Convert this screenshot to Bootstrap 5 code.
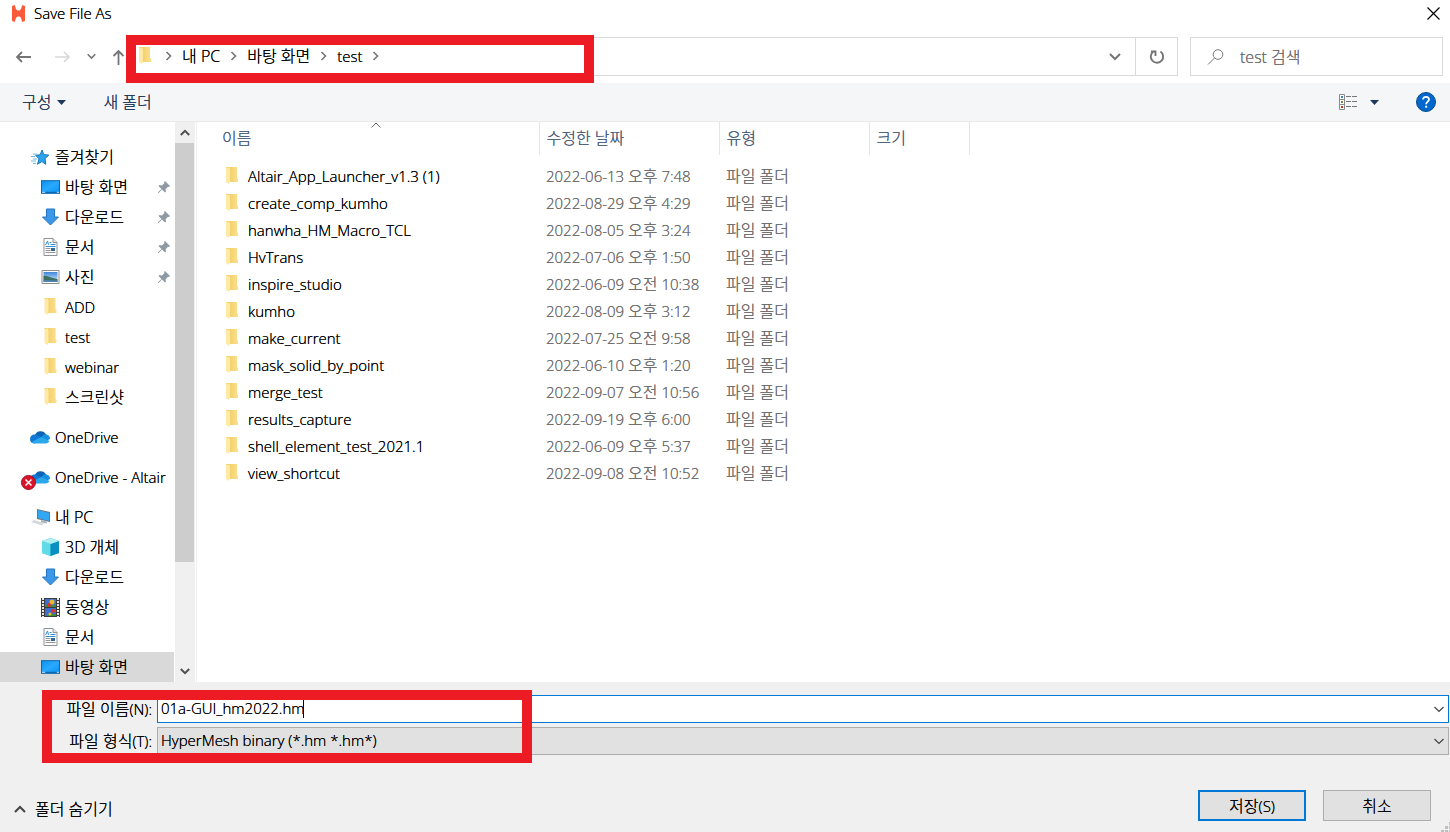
<!DOCTYPE html>
<html lang="ko">
<head>
<meta charset="utf-8">
<meta name="viewport" content="width=device-width, initial-scale=1">
<title>Save File As</title>
<link href="https://cdn.jsdelivr.net/npm/bootstrap@5.3.0/dist/css/bootstrap.min.css" rel="stylesheet">
<style>
  body, .btn, .form-control, .form-select { font-family: "Open Sans", "Noto Sans CJK KR", sans-serif; font-size: 15px; font-weight: 300; line-height: 20px; color: #000; border-radius: 0; text-shadow: 0 0 0 currentColor; }
  .hangul { font-size: 16px; }
  svg { display: block; flex: none; }
  .btn { padding: 0; border: 0; }
  .title-bar { height: 28px; padding: 0 10px 2px 11px; }
  .address-row { height: 55px; padding: 9px 7px 7px 15px; }
  .nav-btn { width: 16px; }
  .address-box, .search-box { border: 1px solid #d9d9d9; background: #fff; height: 39px; }
  .crumbs { gap: 10px; padding: 0 0 2px 9px; }
  .history-btn { margin-right: 14px; }
  .refresh-btn { width: 42px; border-left: 1px solid #d9d9d9; }
  .search-box { width: 253px; margin-left: 12px; }
  .search-box input::placeholder { color: #6d6d6d; opacity: 1; }
  .callout-box { position: absolute; border: 10px solid #ed1c24; pointer-events: none; z-index: 3; }
  .callout-path { left: -4px; top: -3px; width: 468px; height: 48px; }
  .callout-name { left: 42px; top: 8px; width: 490px; height: 73px; }
  .tool-row { height: 39px; background: #f5f6f7; border-bottom: 1px solid #e8e9ea; padding: 0 14px 0 22px; }
  .tool-row .btn { color: #1e395b; }
  .tool-row .btn-next { margin-left: 37px; }
  .menu-gap { gap: 6px; }
  .view-gap { gap: 13px; }
  .tree { width: 175px; padding-top: 20px; }
  .tree a { display: flex; align-items: center; height: 30px; gap: 5px; padding-left: 41px; padding-right: 3px; color: #000; text-decoration: none; white-space: nowrap; margin-right: 1px; }
  .tree a.root { padding-left: 30px; }
  .tree a.latin { font-size: 15px; }
  .tree .group-gap { margin-top: 10px; }
  .tree a.selected { background: #d9d9d9; }
  .error-dot { position: absolute; left: -9px; top: 5px; }
  .scroll-track { width: 20px; background: #f0f0f0; margin-right: 1px; }
  .scroll-track .btn { height: 21px; width: 19px; }
  .scroll-thumb { flex: 419 1 0; width: 19px; background: #cdcdcd; }
  .scroll-rest { flex: 99 1 0; }
  .file-pane { border-left: 1px solid #f0f0f0; }
  .file-table { table-layout: fixed; width: 100%; }
  .file-table th { height: 33px; padding: 0 7px 2px; border-right: 1px solid #e5e5e5; color: #4c607a; font-weight: 300; font-size: 16px; position: relative; }
  .file-table th:first-child { padding-left: 25px; }
  .file-table th:last-child { border: 0; }
  .file-table td { height: 27px; padding: 0 7px; color: #6d6d6d; white-space: nowrap; }
  .file-table td:first-child { padding-left: 29px; color: #000; }
  .file-table tbody::before { content: ""; display: block; height: 7px; }
  .fname { gap: 10px; }
  .sort-mark { position: absolute; left: 174px; top: 0; }
  .dialog-foot { background: #f0f0f0; height: 150px; padding: 13px 1px 0 0; }
  .field-label { width: 157px; padding-right: 5px; text-align: right; white-space: nowrap; }
  .field { height: 28px; padding: 0 24px 2px 3px; }
  .field-name { border: 1px solid #0078d7; }
  .field-type { border: 1px solid #adadad; background: #e1e1e1; }
  .field-mark { position: absolute; right: 5px; top: 11px; pointer-events: none; }
  .caret { position: absolute; left: 146px; top: 4px; width: 1px; height: 19px; background: #000; }
  .foot-btns { padding: 35px 18px 0 14px; gap: 17px; }
  .hide-btn { gap: 9px; padding-top: 6px; }
  .push { width: 108px; height: 31px; background: #e1e1e1; border: 1px solid #adadad; }
  .push-main { border: 2px solid #0078d7; }
  .grip { position: absolute; right: 0; bottom: 0; }
</style>
</head>
<body>
<svg width="0" height="0" class="position-absolute" aria-hidden="true">
  <defs>
    <linearGradient id="gFold" x1="0" x2="1"><stop offset="0" stop-color="#f2cf6b"/><stop offset="1" stop-color="#fbe08c"/></linearGradient>
    <linearGradient id="gScreen" x1="0" x2="1" y2="1"><stop offset="0" stop-color="#0a94f2"/><stop offset=".5" stop-color="#2aa9ff"/><stop offset="1" stop-color="#0c95f5"/></linearGradient>
    <linearGradient id="gSky" x2="0" y2="1"><stop offset="0" stop-color="#3f86d8"/><stop offset="1" stop-color="#d9efff"/></linearGradient>
  </defs>
  <symbol id="folder" viewBox="0 0 12 18"><path d="M3 0h8v11l1 1v3H3z" fill="url(#gFold)"/><path d="M0 0h2l2 2v13l-1 2-3-2z" fill="#ffe9a6"/><path d="M0 0h3v1H0z" fill="#f6d778"/></symbol>
  <symbol id="desktop" viewBox="0 0 18 13"><path d="M0 0h18v13H0z" fill="#0b68b0"/><path d="M1 1h16v10H1z" fill="url(#gScreen)"/><path d="M1 11h3v1H1zM15 11h2v1h-2z" fill="#d8efff"/></symbol>
  <symbol id="download" viewBox="0 0 18 18"><path d="M5 1h8v8h4l-8 8-8-8h4z" fill="#3b97e8" stroke="#2476c4"/></symbol>
  <symbol id="docs" viewBox="0 0 16 18"><path d="M1.500.5h9l4 4v13h-13z" fill="#fff" stroke="#8d9297"/><path d="M10.500.5v4h4" fill="#e5e5e5" stroke="#8d9297"/><path d="M3 7l2-4 1 4M7 4.500h2M8 6.500h5M3 8.500h10" fill="none" stroke="#2f8fd6"/><path d="M8.500 10h4v3h-4z" fill="#35699b"/><path d="M3 10.500h5M3 12.500h5M3 14.500h10" stroke="#999"/></symbol>
  <symbol id="photo" viewBox="0 0 18 14"><path d="M.5.5h17v13H.5z" fill="#fff" stroke="#8c8c8c"/><path d="M2 2h14v10H2z" fill="url(#gSky)"/><path d="M2 6c4-1 6 2 14 3v3H2z" fill="#3f6f62"/><path d="M2 10l14 .5V12H2z" fill="#4d86b5"/></symbol>
  <symbol id="cloud" viewBox="0 0 20 14"><path d="M5 5a6 6 0 0 1 11-.5L12 9 4 8z" fill="#0a63b4"/><path d="M4.500 4.500A5 5 0 0 1 9 6l6 4-11 3.500A4.500 4.500 0 0 1 0 9a4.500 4.500 0 0 1 4.500-4.500z" fill="#0f78d4"/><path d="M11 7.500c1.500-3 4-3.500 5.500-3A4.600 4.600 0 0 1 20 9l-4 2z" fill="#1490df"/><path d="M1.500 12L11 7l8.500 4a4 4 0 0 1-3.500 2.500H4.500A4.500 4.500 0 0 1 1.500 12z" fill="#2aa8ea"/></symbol>
  <symbol id="pin" viewBox="0 0 14 14"><path d="M8 1l5 5-1 1-1-.3-2.500 2.500.5 2.300L8 12.500 5 9.500 1.500 13H1v-.7L4.500 9l-3-3 1-1L5 5.500 7.500 3 7 2z" fill="#8e99a3"/></symbol>
  <symbol id="chev-r" viewBox="0 0 7 10"><path d="M1.500 1l4 4-4 4" fill="none" stroke="#767676" stroke-width="1.600"/></symbol>
  <symbol id="chev-thin" viewBox="0 0 10 7"><path d="M.5 1L5 5.500 9.500 1" fill="none" stroke="#444" stroke-width="1.200"/></symbol>
</svg>

<div class="d-flex flex-column min-vh-100 bg-white">
  <header class="title-bar d-flex align-items-center">
    <svg width="15" height="17" viewBox="0 0 15 17"><path d="M1 1l3-1c.5 4 1.500 5.500 3.500 5.500S10.500 4 11 0l3 1v15l-3 1c-.5-4-1.500-5.500-3.500-5.500S4.500 13 4 17l-3-1z" fill="#fa5a3c"/></svg>
    <span class="ms-2">Save File As</span>
    <button class="btn ms-auto" aria-label="닫기"><svg width="13" height="13" viewBox="0 0 13 13"><path d="M.5.5l12 12M12.500.5l-12 12" stroke="#000" stroke-width="1.200"/></svg></button>
  </header>

  <div class="address-row d-flex">
    <nav class="d-flex align-items-center" aria-label="탐색">
      <button class="btn nav-btn" aria-label="뒤로"><svg width="17" height="12" viewBox="0 0 17 12"><path d="M16 6H2M7 1L2 6l5 5" fill="none" stroke="#757575" stroke-width="1.800"/></svg></button>
      <button class="btn nav-btn ms-4" aria-label="앞으로"><svg width="17" height="12" viewBox="0 0 17 12"><path d="M0 6h14M9 1l5 5-5 5" fill="none" stroke="#d8d8d8" stroke-width="1.600"/></svg></button>
      <button class="btn ms-3" aria-label="최근 위치"><svg width="9" height="7" viewBox="0 0 9 7"><path d="M.7 1.200l3.800 3.800 3.800-3.800" fill="none" stroke="#757575" stroke-width="1.600"/></svg></button>
      <button class="btn ms-3" aria-label="위로"><svg width="13" height="16" viewBox="0 0 13 16"><path d="M6.500 16V2M1.500 7l5-5 5 5" fill="none" stroke="#757575" stroke-width="1.800"/></svg></button>
    </nav>
    <div class="address-box d-flex flex-grow-1 position-relative ms-1">
      <div class="crumbs d-flex align-items-center flex-grow-1">
        <svg class="me-1" width="12" height="18"><use href="#folder"/></svg>
        <svg width="7" height="10"><use href="#chev-r"/></svg>
        <span class="hangul">내 PC</span>
        <svg width="7" height="10"><use href="#chev-r"/></svg>
        <span class="hangul">바탕 화면</span>
        <svg width="7" height="10"><use href="#chev-r"/></svg>
        <span>test</span>
        <svg width="7" height="10"><use href="#chev-r"/></svg>
      </div>
      <button class="btn history-btn" aria-label="이전 위치"><svg width="12" height="9" viewBox="0 0 12 9"><path d="M1 2l5 5 5-5" fill="none" stroke="#757575" stroke-width="2"/></svg></button>
      <button class="btn refresh-btn d-flex align-items-center justify-content-center" aria-label="새로 고침"><svg width="16" height="16" viewBox="0 0 16 16"><path d="M11.500 2.500a6.200 6.200 0 1 1-7.500.3M2 2.500h4.500V7" fill="none" stroke="#757575" stroke-width="1.900"/></svg></button>
      <div class="callout-box callout-path"></div>
    </div>
    <div class="search-box d-flex align-items-center">
      <svg class="ms-3" width="17" height="16" viewBox="0 0 17 16"><circle cx="11" cy="5.500" r="4.800" fill="none" stroke="#777"/><path d="M7.500 9L1 15.500" stroke="#777"/></svg>
      <input class="form-control border-0 p-0 ms-3 bg-transparent hangul" type="search" placeholder="test 검색" aria-label="test 검색">
    </div>
  </div>

  <div class="tool-row d-flex align-items-center">
    <button class="btn hangul d-flex align-items-center menu-gap">구성<svg width="9" height="5" viewBox="0 0 9 5"><path d="M0 0h9L4.500 5z" fill="#1e395b"/></svg></button>
    <button class="btn hangul btn-next">새 폴더</button>
    <button class="btn ms-auto d-flex align-items-center view-gap" aria-label="보기 변경"><svg width="18" height="16" viewBox="0 0 18 16"><path d="M.5.5h5v15h-5zM.5 5.500h5M.5 10.500h5" fill="#fff" stroke="#8a8a8a"/><path d="M7 2.500h5M13 2.500h5M7 7.500h5M13 7.500h5M7 12.500h5M13 12.500h5" stroke="#777"/><path d="M2 2h2v2H2z" fill="#3c7fc0"/><path d="M2 7h2v2H2z" fill="#6a8f3c"/><path d="M2 12h2v2H2z" fill="#c0391f"/></svg><svg width="9" height="5" viewBox="0 0 9 5"><path d="M0 0h9L4.500 5z" fill="#1e395b"/></svg></button>
    <button class="btn btn-next" aria-label="도움말"><svg width="20" height="20" viewBox="0 0 20 20"><circle cx="10" cy="10" r="9.500" fill="#0067cc" stroke="#0b4c8c"/><path d="M7 7.500C7 3.800 13 4 13 7.500c0 2.200-2.800 2.200-2.800 4.700" fill="none" stroke="#fff" stroke-width="1.800"/><path d="M9.200 13.700h2v2h-2z" fill="#fff"/></svg></button>
  </div>

  <main class="d-flex flex-grow-1">
    <nav class="tree flex-shrink-0 hangul" aria-label="폴더">
      <a href="#" class="root"><svg width="20" height="18" viewBox="0 0 20 18"><path d="M12 2l1.800 4.700 5 .4-3.800 3.400.8 5.800-4-2.800-4.300 2.800 1.500-5.500-3.300-3.500 4.500-.5z" fill="#2ba3ee" stroke="#1478bd"/><path d="M3 6h4M1 8.500h4M3 11h4M1 13h5M3 15.500h3" stroke="#6bbbe8"/></svg>즐겨찾기</a>
      <a href="#"><svg width="19" height="14"><use href="#desktop"/></svg>바탕 화면<svg class="ms-auto" width="14" height="14"><use href="#pin"/></svg></a>
      <a href="#"><svg width="19" height="18"><use href="#download"/></svg>다운로드<svg class="ms-auto" width="14" height="14"><use href="#pin"/></svg></a>
      <a href="#"><svg width="19" height="18"><use href="#docs"/></svg>문서<svg class="ms-auto" width="14" height="14"><use href="#pin"/></svg></a>
      <a href="#"><svg width="19" height="14"><use href="#photo"/></svg>사진<svg class="ms-auto" width="14" height="14"><use href="#pin"/></svg></a>
      <a href="#" class="latin"><svg width="19" height="18"><use href="#folder"/></svg>ADD</a>
      <a href="#" class="latin"><svg width="19" height="18"><use href="#folder"/></svg>test</a>
      <a href="#" class="latin"><svg width="19" height="18"><use href="#folder"/></svg>webinar</a>
      <a href="#"><svg width="19" height="18"><use href="#folder"/></svg>스크린샷</a>
      <a href="#" class="root latin group-gap"><svg width="20" height="14"><use href="#cloud"/></svg>OneDrive</a>
      <a href="#" class="root latin group-gap"><span class="position-relative"><svg width="20" height="14"><use href="#cloud"/></svg><svg class="error-dot" width="15" height="15" viewBox="0 0 15 15"><circle cx="7.500" cy="7.500" r="7" fill="#d9142b" stroke="#a50d20"/><path d="M4.500 4.500l6 6M10.500 4.500l-6 6" stroke="#fff" stroke-width="1.500"/></svg></span>OneDrive - Altair</a>
      <a href="#" class="root group-gap"><svg width="20" height="18" viewBox="0 0 20 18"><path d="M7 1l13 3v10L7 11z" fill="#6b7680"/><path d="M8 2l11 3v8L8 10z" fill="#31a8f5"/><path d="M11 12l6 1.500v2l-6-1z" fill="#aeb4ba"/><path d="M4 12l10 3-2 2.500L1 14z" fill="#d5d9dc"/></svg>내 PC</a>
      <a href="#"><svg width="19" height="18" viewBox="0 0 19 18"><path d="M9.500 0L18 3v12l-8.500 3L1 15V3z" fill="#2cc0d8"/><path d="M1 3l8.500 3v12L1 15z" fill="#63dbe6"/><path d="M9.500 6L18 3v12l-8.500 3z" fill="#0a8fc0"/><path d="M9.500 0L18 3 9.500 6 1 3z" fill="#aef0f2"/></svg>3D 개체</a>
      <a href="#"><svg width="19" height="18"><use href="#download"/></svg>다운로드</a>
      <a href="#"><svg width="19" height="19" viewBox="0 0 19 19"><path d="M0 0h19v19H0z" fill="#3b3b3b"/><path d="M2 0v19M17 0v19" stroke="#e8e8e8" stroke-width="2" stroke-dasharray="2 1"/><path d="M4 1h11v8H4zM4 10h11v8H4z" fill="#3f6fd0"/><path d="M5 7h9v2H5zM6 16h8v2H6z" fill="#3c8f3a"/><circle cx="11" cy="4" r="2.500" fill="#e9b92c"/><circle cx="8" cy="7" r="2" fill="#d9342b"/><circle cx="12" cy="13" r="2" fill="#d9342b"/><circle cx="9" cy="16" r="1.500" fill="#e9b92c"/></svg>동영상</a>
      <a href="#"><svg width="19" height="18"><use href="#docs"/></svg>문서</a>
      <a href="#" class="selected"><svg width="19" height="14"><use href="#desktop"/></svg>바탕 화면</a>
    </nav>
    <div class="scroll-track d-flex flex-column flex-shrink-0">
      <button class="btn d-flex align-items-center justify-content-center" aria-label="위로 스크롤"><svg width="10" height="7" viewBox="0 0 10 7"><path d="M.8 6L5 1.800 9.200 6" fill="none" stroke="#505050" stroke-width="2"/></svg></button>
      <div class="scroll-thumb"></div>
      <div class="scroll-rest"></div>
      <button class="btn d-flex align-items-center justify-content-center" aria-label="아래로 스크롤"><svg width="10" height="7" viewBox="0 0 10 7"><path d="M.8 1L5 5.200 9.200 1" fill="none" stroke="#505050" stroke-width="2"/></svg></button>
    </div>
    <section class="file-pane flex-grow-1">
      <table class="file-table">
        <colgroup><col style="width:342px"><col style="width:180px"><col style="width:150px"><col style="width:100px"><col></colgroup>
        <thead><tr><th>이름<svg class="sort-mark" width="10" height="7" viewBox="0 0 10 7"><path d="M.5 5.500L5 1l4.500 4.500" fill="none" stroke="#666"/></svg></th><th>수정한 날짜</th><th>유형</th><th>크기</th><th></th></tr></thead>
        <tbody>
          <tr><td><div class="d-flex align-items-center fname"><svg width="12" height="18"><use href="#folder"/></svg>Altair_App_Launcher_v1.3 (1)</div></td><td>2022-06-13 <span class="hangul">오후</span> 7:48</td><td class="hangul">파일 폴더</td><td></td><td></td></tr>
          <tr><td><div class="d-flex align-items-center fname"><svg width="12" height="18"><use href="#folder"/></svg>create_comp_kumho</div></td><td>2022-08-29 <span class="hangul">오후</span> 4:29</td><td class="hangul">파일 폴더</td><td></td><td></td></tr>
          <tr><td><div class="d-flex align-items-center fname"><svg width="12" height="18"><use href="#folder"/></svg>hanwha_HM_Macro_TCL</div></td><td>2022-08-05 <span class="hangul">오후</span> 3:24</td><td class="hangul">파일 폴더</td><td></td><td></td></tr>
          <tr><td><div class="d-flex align-items-center fname"><svg width="12" height="18"><use href="#folder"/></svg>HvTrans</div></td><td>2022-07-06 <span class="hangul">오후</span> 1:50</td><td class="hangul">파일 폴더</td><td></td><td></td></tr>
          <tr><td><div class="d-flex align-items-center fname"><svg width="12" height="18"><use href="#folder"/></svg>inspire_studio</div></td><td>2022-06-09 <span class="hangul">오전</span> 10:38</td><td class="hangul">파일 폴더</td><td></td><td></td></tr>
          <tr><td><div class="d-flex align-items-center fname"><svg width="12" height="18"><use href="#folder"/></svg>kumho</div></td><td>2022-08-09 <span class="hangul">오후</span> 3:12</td><td class="hangul">파일 폴더</td><td></td><td></td></tr>
          <tr><td><div class="d-flex align-items-center fname"><svg width="12" height="18"><use href="#folder"/></svg>make_current</div></td><td>2022-07-25 <span class="hangul">오전</span> 9:58</td><td class="hangul">파일 폴더</td><td></td><td></td></tr>
          <tr><td><div class="d-flex align-items-center fname"><svg width="12" height="18"><use href="#folder"/></svg>mask_solid_by_point</div></td><td>2022-06-10 <span class="hangul">오후</span> 1:20</td><td class="hangul">파일 폴더</td><td></td><td></td></tr>
          <tr><td><div class="d-flex align-items-center fname"><svg width="12" height="18"><use href="#folder"/></svg>merge_test</div></td><td>2022-09-07 <span class="hangul">오전</span> 10:56</td><td class="hangul">파일 폴더</td><td></td><td></td></tr>
          <tr><td><div class="d-flex align-items-center fname"><svg width="12" height="18"><use href="#folder"/></svg>results_capture</div></td><td>2022-09-19 <span class="hangul">오후</span> 6:00</td><td class="hangul">파일 폴더</td><td></td><td></td></tr>
          <tr><td><div class="d-flex align-items-center fname"><svg width="12" height="18"><use href="#folder"/></svg>shell_element_test_2021.1</div></td><td>2022-06-09 <span class="hangul">오후</span> 5:37</td><td class="hangul">파일 폴더</td><td></td><td></td></tr>
          <tr><td><div class="d-flex align-items-center fname"><svg width="12" height="18"><use href="#folder"/></svg>view_shortcut</div></td><td>2022-09-08 <span class="hangul">오전</span> 10:52</td><td class="hangul">파일 폴더</td><td></td><td></td></tr>
        </tbody>
      </table>
    </section>
  </main>

  <footer class="dialog-foot position-relative">
    <div class="d-flex align-items-center">
      <label class="field-label" for="fname"><span class="hangul">파일 이름</span>(N):</label>
      <div class="position-relative flex-grow-1">
        <input class="form-control field field-name" id="fname" type="text" value="01a-GUI_hm2022.hm">
        <span class="caret"></span>
        <svg class="field-mark" width="10" height="7"><use href="#chev-thin"/></svg>
      </div>
    </div>
    <div class="d-flex align-items-center mt-1">
      <label class="field-label" for="ftype"><span class="hangul">파일 형식</span>(T):</label>
      <div class="position-relative flex-grow-1">
        <select class="form-select field field-type" id="ftype"><option>HyperMesh binary (*.hm *.hm*)</option></select>
        <svg class="field-mark" width="10" height="7"><use href="#chev-thin"/></svg>
      </div>
    </div>
    <div class="foot-btns d-flex">
      <button class="btn hangul d-flex align-items-center hide-btn me-auto"><svg width="12" height="8" viewBox="0 0 12 8"><path d="M1 7l5-5 5 5" fill="none" stroke="#444" stroke-width="2"/></svg>폴더 숨기기</button>
      <button class="btn push push-main"><span class="hangul">저장</span>(S)</button>
      <button class="btn push hangul">취소</button>
    </div>
    <svg class="grip" width="9" height="10" viewBox="0 0 9 10"><path d="M0 8h3v2H0zM4 8h3v2H4zM8 8h1v2H8zM4 4h3v3H4zM8 4h1v3H8zM8 0h1v3H8z" fill="#bfbfbf"/></svg>
    <div class="callout-box callout-name"></div>
  </footer>
</div>
<script src="https://cdn.jsdelivr.net/npm/bootstrap@5.3.0/dist/js/bootstrap.bundle.min.js"></script>
</body>
</html>
